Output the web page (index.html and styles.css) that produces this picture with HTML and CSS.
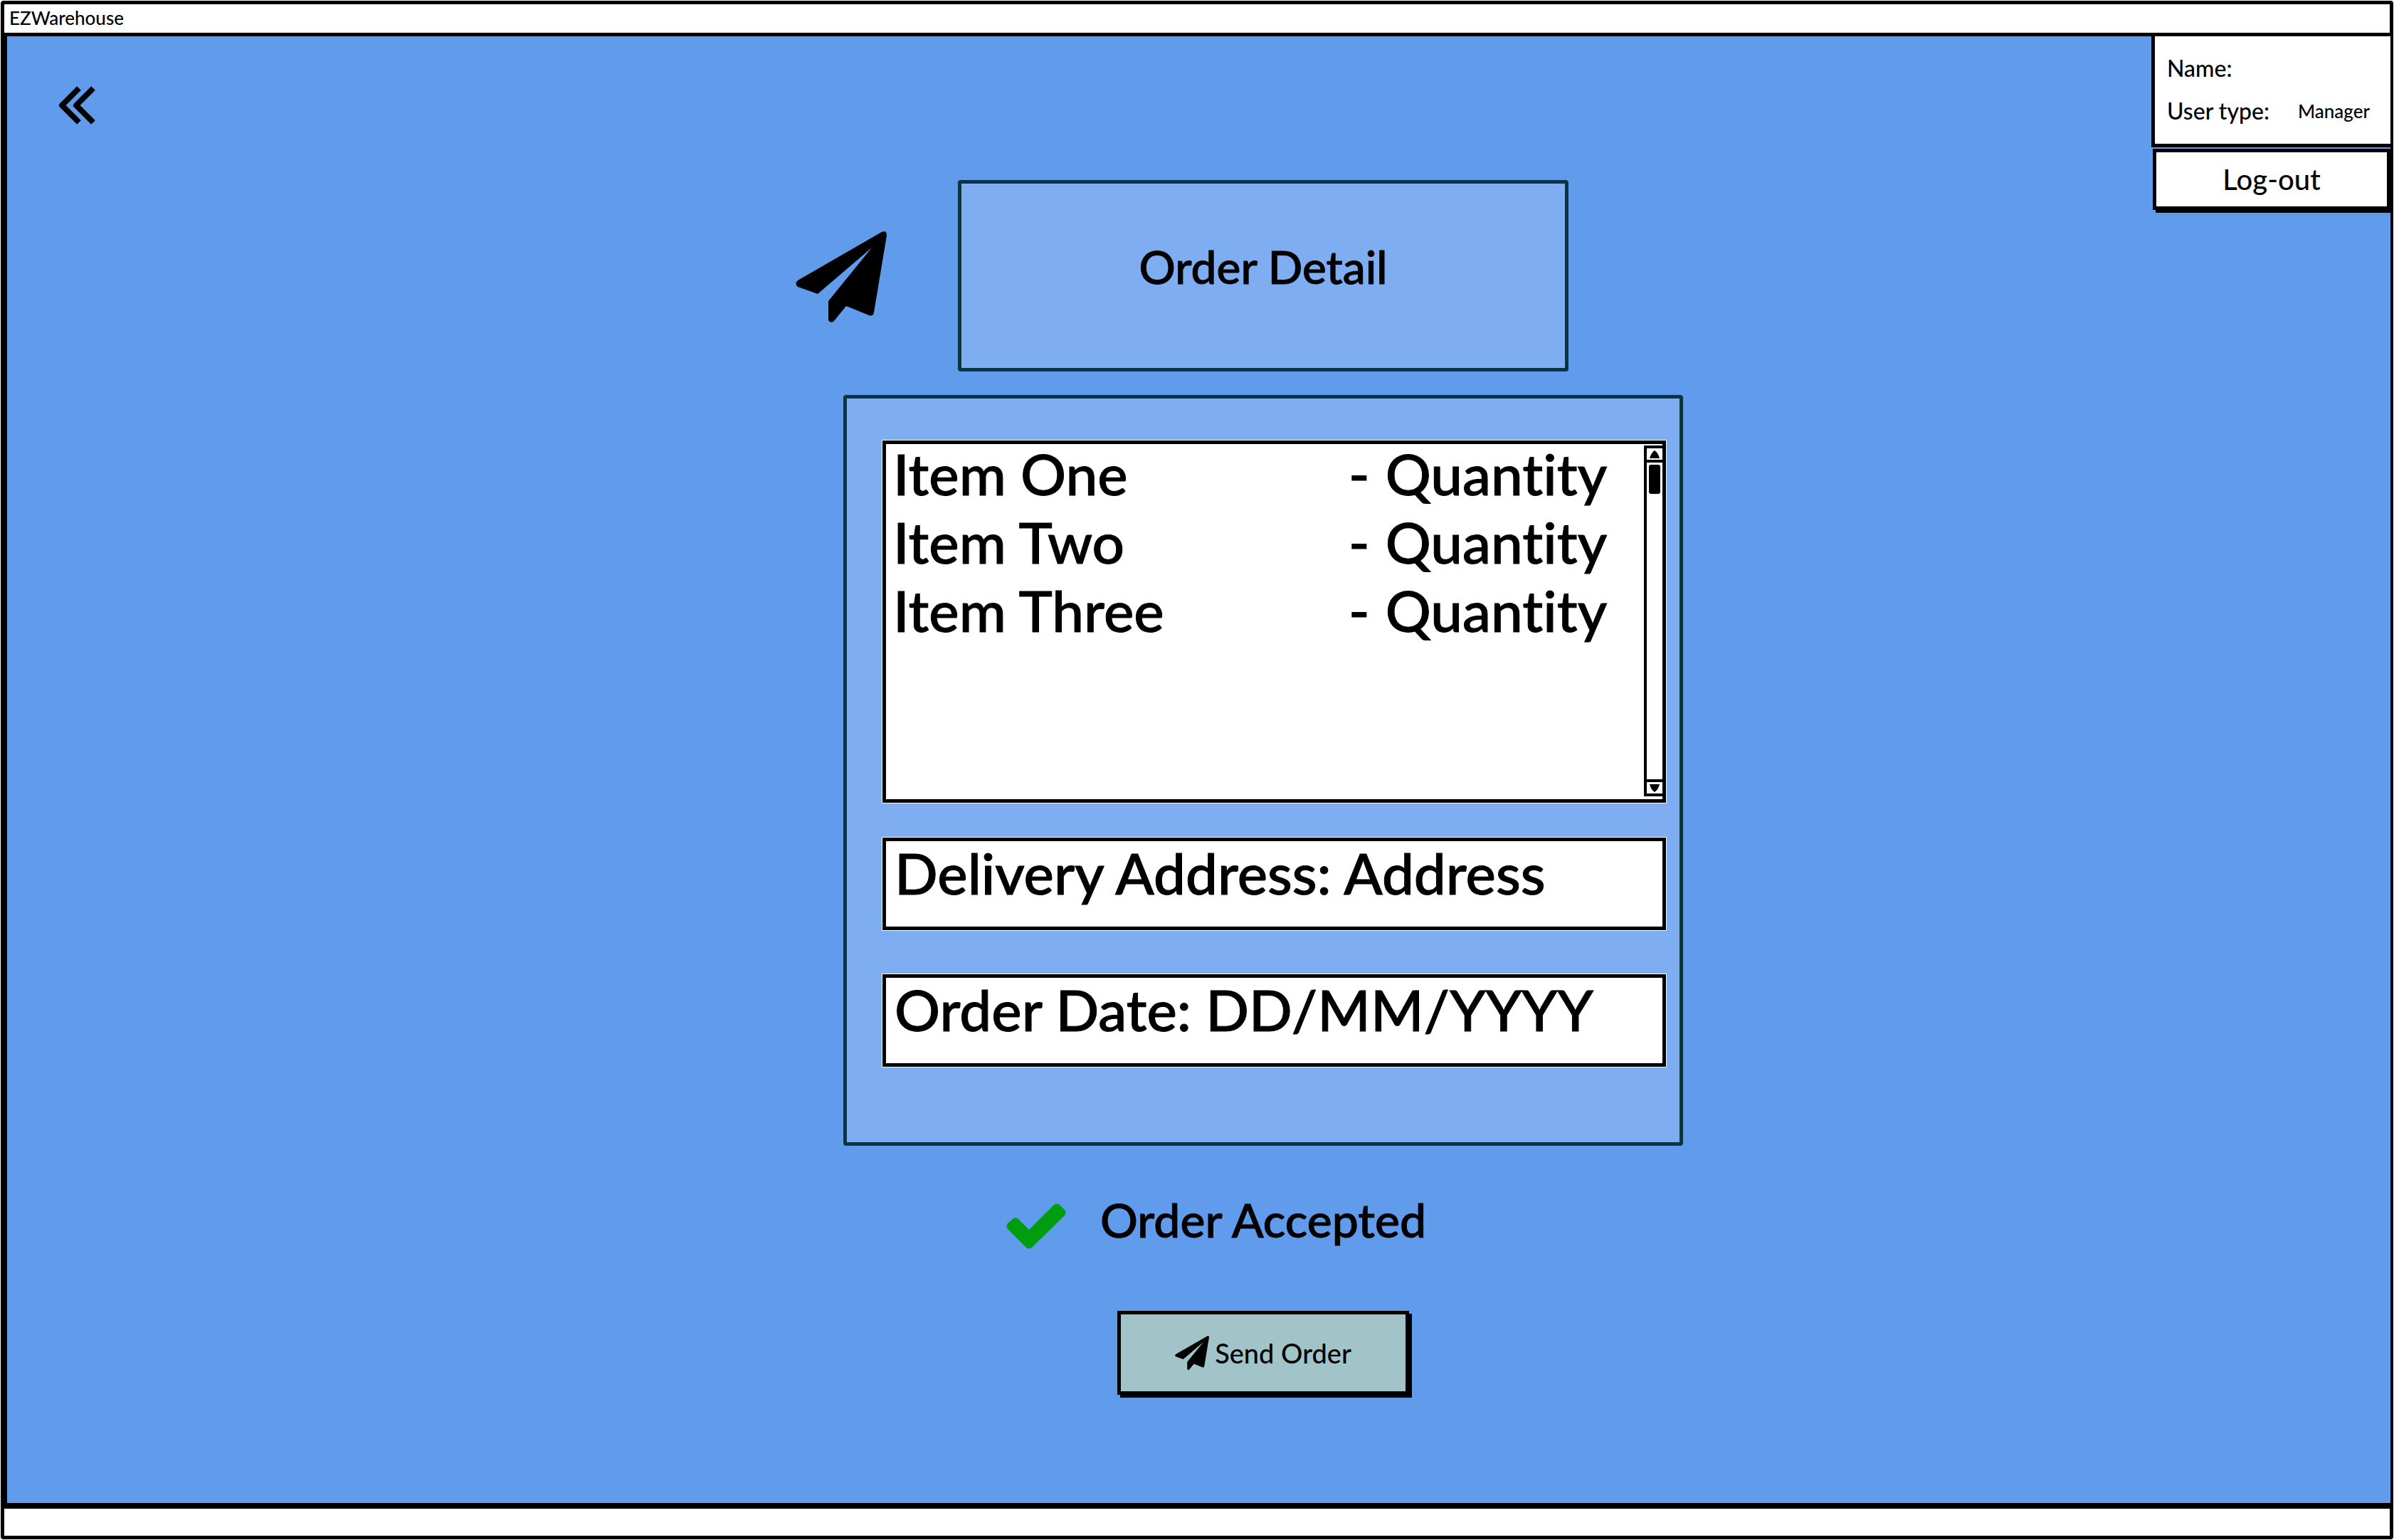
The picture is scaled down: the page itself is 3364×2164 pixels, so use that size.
FILE: index.html
```html
<!DOCTYPE html>
<html lang="en">
<head>
<meta charset="utf-8">
<title>EZWarehouse</title>
<link rel="stylesheet" href="styles.css">
</head>
<body>
<svg class="sprite" aria-hidden="true">
  <symbol id="plane" viewBox="0 0 128 128">
    <path d="M121 1Q128-2 128 6L110 114Q109 120 103 118L71 105L54 126Q51 129 48 127Q46 126 46 123V98L107 23L31 88L3 78Q-2 73 3 69Z"/>
  </symbol>
</svg>
<div class="window">
  <header class="titlebar">EZWarehouse</header>
  <main class="screen">
    <nav class="side">
      <button class="back" type="button" aria-label="Back">
        <svg class="back-icon" viewBox="0 0 52 54"><path d="M29 3 5 27 29 51M49 3 25 27 49 51"/></svg>
      </button>
    </nav>
    <section class="order">
      <div class="heading">
        <svg class="plane-large" aria-hidden="true"><use href="#plane"/></svg>
        <h1 class="heading-box">Order Detail</h1>
      </div>
      <div class="panel">
        <div class="items">
          <table class="items-table">
            <tr><td class="item-name">Item One</td><td>-</td><td>Quantity</td></tr>
            <tr><td class="item-name">Item Two</td><td>-</td><td>Quantity</td></tr>
            <tr><td class="item-name">Item Three</td><td>-</td><td>Quantity</td></tr>
          </table>
          <div class="scrollbar">
            <button class="scroll-step" type="button" aria-label="Scroll up"><svg class="arrow" viewBox="0 0 14 11"><path d="M0 11Q3 2 7 0Q12 3 14 11Z"/></svg></button>
            <div class="scroll-track"><div class="scroll-thumb"></div></div>
            <button class="scroll-step" type="button" aria-label="Scroll down"><svg class="arrow" viewBox="0 0 14 11"><path d="M0 0H14Q12 8 7 11Q2 8 0 0Z"/></svg></button>
          </div>
        </div>
        <p class="field address">Delivery Address: Address</p>
        <p class="field date">Order Date: DD/MM/YYYY</p>
      </div>
      <div class="status">
        <svg class="check" viewBox="0 0 84 64" aria-hidden="true"><path d="M9 22Q13 18 17 22L32 37L67 2Q71-1 75 2L82 9Q85 13 82 17L36 62Q32 65 28 62L2 36Q-1 32 2 28Z"/></svg>
        <span>Order Accepted</span>
      </div>
      <button class="send" type="button"><svg class="plane-small" aria-hidden="true"><use href="#plane"/></svg>Send Order</button>
    </section>
    <aside class="account">
      <dl class="user">
        <div class="user-row"><dt>Name:</dt><dd></dd></div>
        <div class="user-row"><dt>User type:</dt><dd>Manager</dd></div>
      </dl>
      <button class="logout" type="button">Log-out</button>
    </aside>
  </main>
  <footer class="statusbar"></footer>
</div>
</body>
</html>
```
FILE: styles.css
```css
* { box-sizing: border-box; }

body {
  margin: 0;
  background: #fff;
  color: #000;
  font-family: Lato, "Liberation Sans", sans-serif;
  font-weight: 500;
  font-variant-ligatures: none;
}

button {
  font: inherit;
  color: inherit;
  cursor: pointer;
}

.sprite {
  position: absolute;
  width: 0;
  height: 0;
}

.window {
  display: flex;
  flex-direction: column;
  min-height: 100vh;
  padding: 1px;
}

.titlebar {
  height: 50px;
  padding: 0 7px;
  border: 5px solid #000;
  border-radius: 4px 4px 0 0;
  font-size: 26px;
  line-height: 38px;
}

.screen {
  flex: 1;
  display: grid;
  grid-template-columns: 1108fr 1314fr 927fr;
  border-left: 9px solid #000;
  border-right: 4px solid #000;
  background: #609bec;
}

.side { padding: 70px 72px; }

.back {
  padding: 0;
  border: 0;
  background: none;
}

.back-icon {
  display: block;
  width: 52px;
  height: 54px;
  fill: none;
  stroke: #000;
  stroke-width: 8px;
  stroke-linejoin: round;
}

.order {
  display: flex;
  flex-direction: column;
  padding-top: 202px;
}

.heading {
  display: grid;
  grid-template-columns: 128px 1fr 128px;
  gap: 100px;
}

.plane-large {
  width: 128px;
  height: 128px;
  margin-top: 72px;
}

.heading-box {
  display: flex;
  align-items: center;
  justify-content: center;
  height: 269px;
  margin: 0;
  padding-bottom: 26px;
  border: 5px solid #0c343d;
  border-radius: 4px;
  background: #7fadf2;
  font-size: 64px;
  font-weight: 500;
  -webkit-text-stroke: 1px #000;
}

.panel {
  margin: 33px 67px 0;
  padding: 59px 19px 106px 50px;
  border: 5px solid #0c343d;
  border-radius: 4px;
  background: #7fadf2;
  font-size: 80px;
  line-height: 82px;
  -webkit-text-stroke: 1px #000;
}

.items,
.field {
  border: 5px solid #000;
  background: #fff;
  box-shadow: 0 0 0 1px #fff;
}

.items {
  display: flex;
  justify-content: space-between;
  height: 509px;
  padding-left: 10px;
}

.items-table {
  align-self: flex-start;
  border-collapse: collapse;
}

.items-table td { padding: 0 22px 14px 0; }

.items-table .item-name {
  width: 640px;
  padding-right: 0;
}

.scrollbar {
  display: flex;
  flex-direction: column;
  width: 26px;
  margin: 2px 0 4px;
  border: 4px solid #000;
  border-right: 0;
}

.scroll-step {
  display: flex;
  align-items: center;
  justify-content: center;
  height: 16px;
  padding: 0;
  border: 0;
  background: #fff;
}

.arrow {
  width: 14px;
  height: 11px;
}

.scroll-track {
  flex: 1;
  padding: 3px;
  border: solid #000;
  border-width: 4px 0;
}

.scroll-thumb {
  height: 41px;
  border-radius: 3px;
  background: #000;
}

.field {
  height: 130px;
  margin: 0;
  padding: 3px 0 0 12px;
}

.address { margin-top: 49px; }

.date { margin-top: 62px; }

.status {
  display: flex;
  align-items: flex-start;
  gap: 48px;
  margin-top: 72px;
  padding-left: 296px;
  font-size: 66px;
  line-height: 64px;
  -webkit-text-stroke: 1px #000;
}

.check {
  width: 84px;
  height: 64px;
  margin-top: 9px;
  fill: #009e0f;
}

.send {
  display: flex;
  align-items: center;
  justify-content: center;
  align-self: center;
  gap: 8px;
  width: 410px;
  height: 118px;
  margin: 87px 0 48px;
  padding: 0;
  border: 5px solid #000;
  background: #a2c4c9;
  box-shadow: 4px 4px 0 #000;
  font-size: 38px;
}

.plane-small {
  width: 48px;
  height: 48px;
}

.account { justify-self: end; }

.user {
  width: 336px;
  height: 156px;
  margin: 0;
  padding: 15px 17px;
  border: solid #000;
  border-width: 0 0 5px 5px;
  background: #fff;
  font-size: 32px;
  line-height: 60px;
}

.user-row {
  display: flex;
  justify-content: space-between;
  padding-right: 12px;
}

.user-row dd {
  margin: 0;
  font-size: 26px;
}

.logout {
  display: block;
  width: 334px;
  height: 86px;
  margin: 2px 0 0 2px;
  padding: 0;
  border: 5px solid #000;
  background: #fff;
  box-shadow: 4px 4px 0 #000;
  font-size: 40px;
}

.statusbar {
  height: 51px;
  border: 5px solid #000;
  border-top-width: 8px;
  border-radius: 0 0 4px 4px;
}
```
